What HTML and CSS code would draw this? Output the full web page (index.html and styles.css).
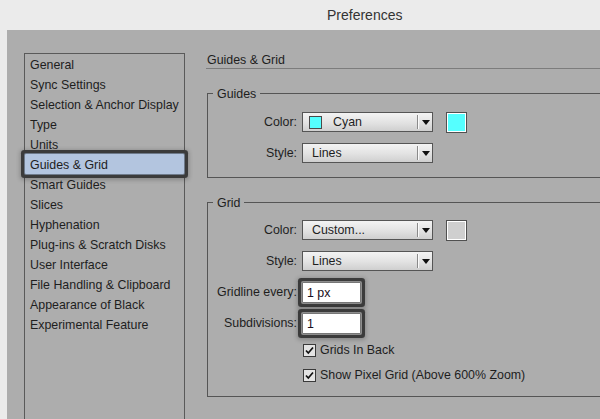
FILE: index.html
```html
<!DOCTYPE html>
<html>
<head>
<meta charset="utf-8">
<title>Preferences</title>
<link rel="stylesheet" href="styles.css">
</head>
<body>
<div class="titlebar"><span class="title">Preferences</span></div>
<div class="window">
  <ul class="nav">
    <li>General</li>
    <li>Sync Settings</li>
    <li>Selection &amp; Anchor Display</li>
    <li>Type</li>
    <li>Units</li>
    <li class="selected">Guides &amp; Grid</li>
    <li>Smart Guides</li>
    <li>Slices</li>
    <li>Hyphenation</li>
    <li>Plug-ins &amp; Scratch Disks</li>
    <li>User Interface</li>
    <li>File Handling &amp; Clipboard</li>
    <li>Appearance of Black</li>
    <li>Experimental Feature</li>
  </ul>
  <div class="main">
    <div class="page-title">Guides &amp; Grid</div>

    <fieldset class="group guides">
      <legend>Guides</legend>
      <div class="row">
        <span class="lbl">Color:</span>
        <div class="select"><span class="chip chip-cyan"></span><span class="val val-chip">Cyan</span><span class="sep"></span><svg class="arrow" width="8" height="5" viewBox="0 0 8 5"><path d="M0 0H8L4 5Z" fill="#111"/></svg></div>
        <span class="swatch swatch-cyan"></span>
      </div>
      <div class="row">
        <span class="lbl">Style:</span>
        <div class="select"><span class="val">Lines</span><span class="sep"></span><svg class="arrow" width="8" height="5" viewBox="0 0 8 5"><path d="M0 0H8L4 5Z" fill="#111"/></svg></div>
      </div>
    </fieldset>

    <fieldset class="group grid">
      <legend>Grid</legend>
      <div class="row">
        <span class="lbl">Color:</span>
        <div class="select"><span class="val">Custom...</span><span class="sep"></span><svg class="arrow" width="8" height="5" viewBox="0 0 8 5"><path d="M0 0H8L4 5Z" fill="#111"/></svg></div>
        <span class="swatch swatch-gray"></span>
      </div>
      <div class="row">
        <span class="lbl">Style:</span>
        <div class="select"><span class="val">Lines</span><span class="sep"></span><svg class="arrow" width="8" height="5" viewBox="0 0 8 5"><path d="M0 0H8L4 5Z" fill="#111"/></svg></div>
      </div>
      <div class="row">
        <span class="lbl">Gridline every:</span>
        <div class="field ringed">1 px</div>
      </div>
      <div class="row">
        <span class="lbl">Subdivisions:</span>
        <div class="field ringed">1</div>
      </div>
      <div class="checks">
        <div class="check"><svg class="box" width="13" height="13" viewBox="0 0 13 13"><rect x="0.5" y="0.5" width="12" height="12" fill="#e4e4e4" stroke="#3a3a3a"/><path d="M3 6.5L5.3 9L10 3.5" fill="none" stroke="#111" stroke-width="1.7"/></svg><span>Grids In Back</span></div>
        <div class="check"><svg class="box" width="13" height="13" viewBox="0 0 13 13"><rect x="0.5" y="0.5" width="12" height="12" fill="#e4e4e4" stroke="#3a3a3a"/><path d="M3 6.5L5.3 9L10 3.5" fill="none" stroke="#111" stroke-width="1.7"/></svg><span>Show Pixel Grid (Above 600% Zoom)</span></div>
      </div>
    </fieldset>
  </div>
</div>
</body>
</html>
```

FILE: styles.css
```css
* { box-sizing: border-box; }
html, body {
  margin: 0;
  padding: 0;
}
body {
  width: 600px;
  height: 419px;
  overflow: hidden;
  background: #ebebeb;
  font-family: "Liberation Sans", Arial, sans-serif;
  font-size: 12.4px;
  color: #1e1e1e;
}
.titlebar {
  height: 30px;
  display: flex;
  align-items: center;
  padding-left: 327px;
  background: #ebebeb;
}
.title {
  font-size: 14px;
  color: #333;
}
.window {
  margin-left: 7px;
  height: 389px;
  background: #adadad;
  display: flex;
  align-items: flex-start;
  overflow: hidden;
}
.nav {
  list-style: none;
  margin: 23px 0 0 17px;
  padding: 0;
  width: 161px;
  height: 420px;
  flex: none;
  border: 1px solid #5a5a5a;
}
.nav li {
  height: 20px;
  padding-top: 2px;
  line-height: 18px;
  padding-left: 5px;
  white-space: nowrap;
}
.nav li.selected {
  position: relative;
  background: #b3c5df;
  border-radius: 1px;
  box-shadow: 0 0 0 1px #6e7a8a, 0 0 0 4px #3b3b3b, 0 1px 4px 5px rgba(0, 0, 0, 0.22);
}
.main {
  flex: 1;
  margin-left: 21px;
  min-width: 0;
}
.page-title {
  margin-top: 20px;
  height: 19px;
  line-height: 20px;
  padding-left: 1px;
  border-bottom: 1px solid #7c7c7c;
}
.group {
  margin: 16px -20px 0 1px;
  padding: 10px 0 14px 0;
  border: 1px solid #555;
  border-right: none;
  min-width: 0;
}
.group legend {
  margin-left: 5px;
  padding: 0 4px;
  line-height: 18px;
  height: 17px;
}
.group.grid {
  padding-top: 9px;
  padding-bottom: 12px;
}
.row {
  display: flex;
  align-items: flex-start;
  height: 20px;
}
.row + .row {
  margin-top: 11px;
}
.lbl {
  width: 89px;
  flex: none;
  text-align: right;
  line-height: 21px;
  white-space: nowrap;
}
.select {
  margin-left: 5px;
  width: 131px;
  height: 20px;
  flex: none;
  display: flex;
  align-items: center;
  padding: 0 2px 0 6px;
  border: 1px solid #555;
  background: linear-gradient(#f3f3f3, #e2e2e2 55%, #cfcfcf);
}
.val {
  margin-left: 3px;
  white-space: nowrap;
  line-height: 19px;
  padding-top: 1px;
}
.val-chip {
  margin-left: 11px;
}
.chip {
  width: 13px;
  height: 13px;
  flex: none;
  border: 1px solid #4a4a4a;
}
.chip-cyan { background: #55ffff; }
.sep {
  margin-left: auto;
  width: 1px;
  height: 14px;
  background: #8a8a8a;
  box-shadow: 1px 0 0 #fafafa;
}
.arrow {
  margin-left: 4px;
  flex: none;
}
.swatch {
  margin-left: 13px;
  width: 21px;
  height: 21px;
  flex: none;
  border: 1px solid #505050;
  box-shadow: inset 0 0 0 1px #fff;
}
.swatch-cyan { background: #55ffff; }
.swatch-gray { background: #cfcfcf; }
.field {
  margin-left: 5px;
  width: 59px;
  height: 21px;
  flex: none;
  background: #fff;
  border: 1px solid #777;
  padding-left: 4px;
  line-height: 20px;
  color: #1a1020;
}
.ringed {
  border-radius: 1px;
  box-shadow: 0 0 0 1px #8d8d8d, 0 0 0 4px #3b3b3b, 0 1px 4px 5px rgba(0, 0, 0, 0.22);
}
.checks {
  margin-top: 8px;
  padding-left: 95px;
  display: flex;
  flex-direction: column;
  gap: 7px;
}
.check {
  display: flex;
  align-items: center;
  gap: 4px;
  height: 18px;
  white-space: nowrap;
}
.check span {
  line-height: 19px;
  padding-top: 1px;
}
.box { flex: none; }
```
